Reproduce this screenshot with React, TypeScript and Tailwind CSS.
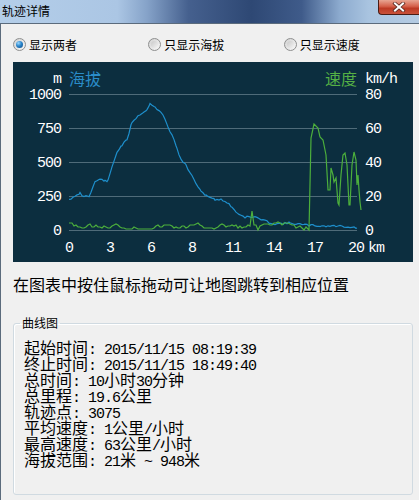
import React from 'react'

type Pt = [number, number]

// chart points are in page pixels; the svg viewBox starts at the chart's page offset
const ELEV_KEYS: Pt[] = [
  [69, 199], [75, 197], [80, 193], [82, 196], [89, 196], [95, 182], [100, 179], [105, 181],
  [108, 181], [112, 167], [117, 152], [122, 145], [127, 140], [132, 122], [138, 116], [142, 113],
  [147, 110], [150, 103], [155, 107], [159, 111], [163, 115], [168, 127], [172, 135], [177, 148],
  [181, 160], [186, 165], [190, 173], [196, 183], [201, 192], [206, 195], [210, 197], [215, 200],
  [219, 199], [225, 201], [232, 207], [237, 213], [245, 217], [255, 217], [265, 221], [275, 224],
  [290, 223], [305, 225], [320, 226], [340, 226], [350, 227], [357, 228],
]

const SPEED_TAIL: Pt[] = [
  [309, 230], [311, 138], [314, 124], [318, 128], [320, 137], [323, 140], [326, 155], [328, 190],
  [330, 190], [331, 168], [333, 175], [334, 182], [336, 178], [338, 203], [339, 205], [341, 175],
  [343, 155], [345, 153], [347, 165], [349, 205], [350, 205], [352, 165], [354, 152], [356, 160],
  [357, 185], [358, 175], [359, 190], [360, 202], [361, 210],
]

const GRID = [94, 128, 162, 196, 230]
const LEFT_LABELS = ['1000', '750', '500', '250', '0']
const RIGHT_LABELS = ['80', '60', '40', '20', '0']
const X_LABELS = ['0', '3', '6', '8', '11', '14', '17', '20']

const STATS = [
  '起始时间: 2015/11/15 08:19:39',
  '终止时间: 2015/11/15 18:49:40',
  '总时间: 10小时30分钟',
  '总里程: 19.6公里',
  '轨迹点: 3075',
  '平均速度: 1公里/小时',
  '最高速度: 63公里/小时',
  '海拔范围: 21米 ~ 948米',
]

function makeRand(seed: number) {
  let s = seed
  return () => {
    s = (s * 9301 + 49297) % 233280
    return s / 233280
  }
}

function elevationLine() {
  const rand = makeRand(11)
  const out: string[] = []
  for (let i = 0; i < ELEV_KEYS.length - 1; i++) {
    const [x0, y0] = ELEV_KEYS[i]
    const [x1, y1] = ELEV_KEYS[i + 1]
    for (let x = x0; x < x1; x += 2) {
      const t = (x - x0) / (x1 - x0)
      const y = y0 + (y1 - y0) * t + (rand() - 0.5) * 2
      out.push(`${x},${y.toFixed(1)}`)
    }
  }
  const last = ELEV_KEYS[ELEV_KEYS.length - 1]
  out.push(`${last[0]},${last[1]}`)
  return out.join(' ')
}

function speedLine() {
  const rand = makeRand(5)
  const out: string[] = ['69,223', '72,223', '74,226']
  let y = 226
  for (let x = 76; x <= 306; x += 2) {
    if (x === 252) {
      out.push('252,211')
      continue
    }
    if (x === 258 || x === 304) {
      out.push(`${x},230`)
      continue
    }
    y = Math.min(230, Math.max(221, y + Math.round((rand() - 0.5) * 6)))
    y = Math.round(y * 0.75 + 226 * 0.25)
    out.push(`${x},${y}`)
  }
  SPEED_TAIL.forEach(([x, yy]) => out.push(`${x},${yy}`))
  return out.join(' ')
}

function Radio({ label, checked }: { label: string; checked?: boolean }) {
  return (
    <div className="w-[138px] flex items-center gap-[3px]">
      <span className="w-[13px] h-[13px] rounded-full border border-[#8e8f8f] bg-[linear-gradient(135deg,#d2d2d2,#f8f8f8)] flex items-center justify-center shrink-0">
        {checked ? (
          <span className="w-[7px] h-[7px] rounded-full bg-[radial-gradient(circle_at_35%_30%,#9ad8ff_0%,#2c86cb_45%,#0a4681_100%)]" />
        ) : (
          <span className="w-[7px] h-[7px] rounded-full bg-[linear-gradient(135deg,#c9c9c9,#f3f3f3)]" />
        )}
      </span>
      <span className="text-[12px] leading-[13px] text-black">{label}</span>
    </div>
  )
}

function MixedLine({ text }: { text: string }) {
  const parts = text.split(/([\u0020-\u007e]+)/).filter((p) => p.length > 0)
  return (
    <div className="h-[16px] leading-[16px] whitespace-pre text-black">
      {parts.map((p, i) =>
        /^[\u0020-\u007e]+$/.test(p) ? (
          <span key={i} className="inline-block h-[16px] leading-[16px] font-['Liberation_Mono',monospace] text-[15px] tracking-[-1px]">
            {p}
          </span>
        ) : (
          <span key={i} className="inline-block h-[16px] leading-[16px] text-[16px]">
            {p}
          </span>
        )
      )}
    </div>
  )
}

function Chart() {
  const mono = "'Liberation Mono', monospace"
  const cjk = "'Noto Sans CJK SC', sans-serif"
  return (
    <svg width={400} height={200} viewBox="13 62 400 200" className="block">
      <rect x={13} y={62} width={400} height={200} fill="#0c2e3f" />
      {GRID.map((g) => (
        <line key={g} x1={69} x2={357} y1={g + 0.5} y2={g + 0.5} stroke="#4f6b79" strokeWidth={1} />
      ))}
      <polyline points={elevationLine()} fill="none" stroke="#1e8fcc" strokeWidth={1.2} />
      <polyline points={speedLine()} fill="none" stroke="#4caf3c" strokeWidth={1.2} />

      <text x={61} y={83} fill="#fff" fontFamily={mono} fontSize={15} letterSpacing={-1} textAnchor="end">m</text>
      <text x={69} y={85} fill="#2a8cc8" fontFamily={cjk} fontSize={16}>海拔</text>
      <text x={325} y={85} fill="#55b045" fontFamily={cjk} fontSize={16}>速度</text>
      <text x={365} y={83} fill="#fff" fontFamily={mono} fontSize={15} letterSpacing={-1}>km/h</text>

      {GRID.map((g, i) => (
        <text key={'l' + g} x={61} y={g + 5} fill="#fff" fontFamily={mono} fontSize={15} letterSpacing={-1} textAnchor="end">
          {LEFT_LABELS[i]}
        </text>
      ))}
      {GRID.map((g, i) => (
        <text key={'r' + g} x={365} y={g + 5} fill="#fff" fontFamily={mono} fontSize={15} letterSpacing={-1}>
          {RIGHT_LABELS[i]}
        </text>
      ))}
      {X_LABELS.map((l, i) => (
        <text key={'x' + l} x={69 + i * 41} y={252} fill="#fff" fontFamily={mono} fontSize={15} letterSpacing={-1} textAnchor="middle">
          {l}
        </text>
      ))}
      <text x={368} y={252} fill="#fff" fontFamily={mono} fontSize={15} letterSpacing={-1}>km</text>
    </svg>
  )
}

export default function App() {
  return (
    <div className="w-[419px] h-[500px] overflow-hidden flex flex-col bg-[#f0f0f0] font-['Noto_Sans_CJK_SC',sans-serif]">
      {/* Title bar */}
      <div className="relative h-[23px] shrink-0 bg-[linear-gradient(90deg,#b4cee9_0%,#abc6e4_28%,#86a3c9_35%,#45608e_45%,#2e4874_60%,#3f5b8a_72%,#8caace_81%,#a9c4e0_88%,#b5cbe2_100%)]">
        <div className="pl-[2px] pt-[5px] text-[12px] leading-[12px] text-black">轨迹详情</div>
        <div className="absolute right-0 top-0 w-[41px] h-[15px] rounded-bl-[4px] border-l border-b border-[#4a1c14] bg-[linear-gradient(180deg,#e8a592_0%,#d5604a_45%,#bd3a24_60%,#c9523a_100%)] flex items-center justify-center">
          <svg width={14} height={10} viewBox="0 0 14 10">
            <path d="M3 1.5 L11 8.5 M11 1.5 L3 8.5" stroke="#5a2a22" strokeWidth={3.6} strokeLinecap="square" />
            <path d="M3 1.5 L11 8.5 M11 1.5 L3 8.5" stroke="#fff" strokeWidth={2} strokeLinecap="square" />
          </svg>
        </div>
      </div>

      {/* Dialog body */}
      <div className="flex-1 flex flex-col border-t border-l border-[#5b6b7c]">
        <div className="mt-[14px] ml-[12px] flex">
          <Radio label="显示两者" checked />
          <Radio label="只显示海拔" />
          <Radio label="只显示速度" />
        </div>

        <div className="mt-[11px] ml-[12px]">
          <Chart />
        </div>

        <div className="mt-[14px] ml-[12px] text-[16px] leading-[16px] text-black">
          在图表中按住鼠标拖动可让地图跳转到相应位置
        </div>

        <fieldset className="mt-[25px] ml-[12px] w-[400px] h-[178px] border border-[#d0dae1] rounded-[3px] shadow-[inset_1px_1px_0_#ffffff]">
          <legend className="ml-[6px] px-[2px] text-[12px] leading-[12px] text-black">曲线图</legend>
          <div className="pl-[10px] pt-[10px]">
            {STATS.map((s) => (
              <MixedLine key={s} text={s} />
            ))}
          </div>
        </fieldset>
      </div>
    </div>
  )
}
